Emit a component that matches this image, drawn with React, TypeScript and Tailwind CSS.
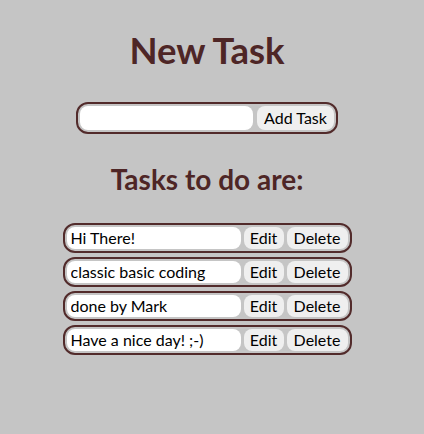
import React from 'react';

const tasks = ['Hi There!', 'classic basic coding', 'done by Mark', 'Have a nice day! ;-)'];

const font = { fontFamily: 'Lato, "Open Sans", sans-serif' };

export default function App() {
  return (
    <div className="min-h-[434px] w-full bg-[#c5c5c5] text-black pr-[10px] flex flex-col items-center" style={font}>
      <h1 className="mt-[27px] text-[36.5px] leading-[46px] font-bold text-[#4e2626]">New Task</h1>

      {/* new task form */}
      <div className="mt-[29px] flex gap-[4px] border-2 border-[#522b2b] rounded-[12px] p-[2px]">
        <input className="w-[173px] h-[24px] rounded-[8px] bg-white outline-none px-1" />
        <button className="h-[24px] px-[7px] rounded-[8px] bg-[#efefef] text-[16px] leading-[24px]">Add Task</button>
      </div>

      <h2 className="mt-[27px] text-[28px] leading-[36px] font-bold text-[#4e2626]">Tasks to do are:</h2>

      {/* task list */}
      <div className="mt-[26px] flex flex-col gap-[4px]">
        {tasks.map((t) => (
          <div key={t} className="flex gap-[3px] border-2 border-[#522b2b] rounded-[12px] p-[2px]">
            <input
              readOnly
              value={t}
              className="w-[174px] h-[22px] rounded-[8px] bg-white outline-none px-[4px] text-[16px]"
              style={font}
            />
            <button className="w-[40px] h-[22px] rounded-[8px] bg-[#efefef] text-[16px] leading-[22px]">Edit</button>
            <button className="w-[61px] h-[22px] rounded-[8px] bg-[#efefef] text-[16px] leading-[22px]">Delete</button>
          </div>
        ))}
      </div>
    </div>
  );
}
